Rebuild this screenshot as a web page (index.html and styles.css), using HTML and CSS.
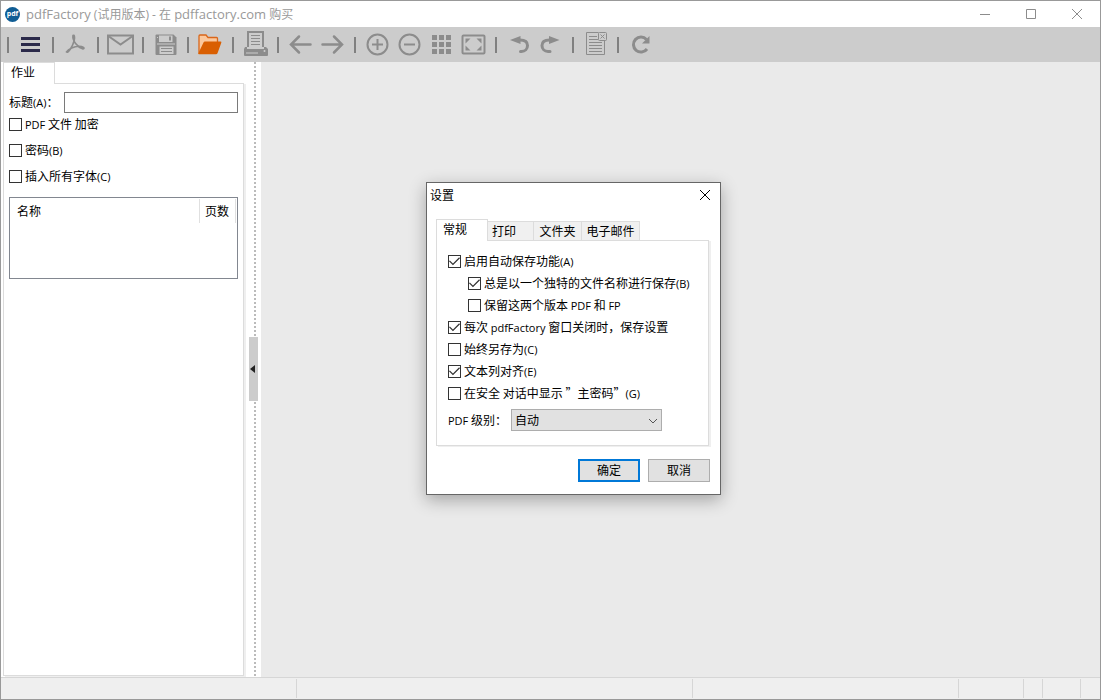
FILE: index.html
```html
<!DOCTYPE html>
<html lang="zh-CN">
<head>
    <meta charset="UTF-8" />
    <meta name="viewport" content="width=device-width, initial-scale=1.0"/>
    <title>pdfFactory (试用版本) - 在 pdffactory.com 购买</title>
    <link rel="stylesheet" href="styles.css">
</head>
<body>
    <div class="window">
        <header class="titlebar">
            <span class="logo">pdf</span>
            <h1><span class="name">pdfFactory</span> (试用版本) - 在 <span class="name">pdffactory.com</span> 购买</h1>
            <div class="window-buttons">
                <button type="button" aria-label="最小化"><svg width="12" height="12"><path d="M1 6.5h10"/></svg></button>
                <button type="button" aria-label="最大化"><svg width="12" height="12"><path d="M1.5 1.5h9v9h-9z"/></svg></button>
                <button type="button" aria-label="关闭"><svg width="12" height="12"><path d="M1 1l10 10M11 1L1 11"/></svg></button>
            </div>
        </header>

        <nav class="toolbar">
            <div class="group">
                <button type="button" aria-label="菜单"><svg viewBox="0 0 32 35"><path d="M6 10h19v3H6zM6 16h19v3H6zM6 22h19v3H6z" fill="#2b2a4a"/></svg></button>
            </div>
            <div class="group">
                <button type="button" aria-label="PDF"><svg viewBox="0 0 32 35" class="line"><path stroke-width="1.6" d="M13 8.5C12 13 17 20 23 22C25.500 21.500 23 19.200 19 19.200C14 19.500 8.500 22 6.500 25C8 26.500 12.500 20 14.200 13.500C15 9.500 14.300 7.500 13 8.500z"/></svg></button>
            </div>
            <div class="group">
                <button type="button" aria-label="邮件"><svg viewBox="0 0 32 35" class="line"><rect x="3" y="8.500" width="25" height="18"/><path d="M4 9.500l11.500 8L27 9.500"/></svg></button>
            </div>
            <div class="group">
                <button type="button" aria-label="保存"><svg viewBox="0 0 32 35"><path fill="#8c8c8c" d="M6.500 7.500h17l3 3V27q0 1-1 1h-19q-1 0-1-1V8.500q0-1 1-1z"/><path fill="#ccc" d="M9 8.500h13.500V15H9zM9.500 19.500h14V27h-14zM7 10h1v1H7zM7 16.500h18v1H7z"/><path fill="#8c8c8c" d="M19 9.500h2v4h-2zM11 21h11v1H11zM11 24h11v1H11z"/></svg></button>
            </div>
            <div class="group">
                <button type="button" aria-label="打开"><svg viewBox="0 0 32 35"><path fill="#fbc89d" stroke="#d9661a" stroke-width="1.3" d="M4 26V9q0-1 1-1h6l2 2.500h8.500q1 0 1 1V16L20 26z"/><path fill="#d95f02" d="M10 14.500h15.500q1.200 0 .8 1.200l-3.800 10.600q-.4 1-1.500 1H4q-1 0-.6-1l5.100-10.800q.4-1 1.500-1z"/></svg></button>
            </div>
            <div class="group">
                <button type="button" aria-label="打印"><svg viewBox="0 0 32 35"><path fill="none" stroke="#8c8c8c" stroke-width="2" d="M8 20V5h15v15"/><path stroke="#8c8c8c" d="M11 8.500h9M11 11.500h9M11 14.500h9M11 17.500h9"/><path fill="#8c8c8c" d="M5 20h2v2h17v-2h2l2 2v6q0 1-1 1H5q-1 0-1-1v-6z"/><path fill="#ccc" d="M6 25.500h12v1H6z"/><circle cx="24.500" cy="24" r="1" fill="#ccc"/></svg></button>
            </div>
            <div class="group">
                <button type="button" aria-label="上一页"><svg viewBox="0 0 32 35" class="line bold"><path d="M25.500 17.500H7M14 9.500l-8 8 8 8"/></svg></button>
                <button type="button" aria-label="下一页"><svg viewBox="0 0 32 35" class="line bold"><path d="M5.500 17.500H24M17 9.500l8 8-8 8"/></svg></button>
            </div>
            <div class="group">
                <button type="button" aria-label="放大"><svg viewBox="0 0 32 35" class="line"><circle cx="15.500" cy="17.500" r="10"/><path d="M10 17.500h11M15.500 12v11"/></svg></button>
                <button type="button" aria-label="缩小"><svg viewBox="0 0 32 35" class="line"><circle cx="15.500" cy="17.500" r="10"/><path d="M10 17.500h11"/></svg></button>
                <button type="button" aria-label="缩略图"><svg viewBox="0 0 32 35"><path fill="#8c8c8c" d="M6 8h5v5H6zM13 8h5v5h-5zM20 8h5v5h-5zM6 15h5v5H6zM13 15h5v5h-5zM20 15h5v5h-5zM6 22h5v5H6zM13 22h5v5h-5zM20 22h5v5h-5z"/></svg></button>
                <button type="button" aria-label="适合窗口"><svg viewBox="0 0 32 35"><rect x="4.500" y="8.500" width="22" height="18" rx="1" fill="none" stroke="#8c8c8c" stroke-width="2"/><path fill="#8c8c8c" d="M7.500 11.500h5l-5 5zM23.500 11.500v5l-5-5zM7.500 23.500v-5l5 5zM23.500 23.500h-5l5-5z"/></svg></button>
            </div>
            <div class="group">
                <button type="button" aria-label="撤消"><svg viewBox="0 0 32 35"><path fill="#8c8c8c" d="M7 13L17.500 9v8z"/><path fill="none" stroke="#8c8c8c" stroke-width="3" stroke-linecap="round" d="M17 13c5 0 7.500 2 7.500 5.500s-2.500 6-6 6h-1"/></svg></button>
                <button type="button" aria-label="重做"><svg viewBox="0 0 32 35"><path fill="#8c8c8c" d="M24.500 13L14 9v8z"/><path fill="none" stroke="#8c8c8c" stroke-width="3" stroke-linecap="round" d="M14.500 13c-5 0-7.500 2-7.500 5.500s2.500 6 6 6h2"/></svg></button>
            </div>
            <div class="group">
                <button type="button" aria-label="附注"><svg viewBox="0 0 32 35" class="line thin"><path d="M18.500 5.500h-12v22h18V14"/><path d="M9 9.500h8M9 12.500h9M9 15.500h13M9 18.500h13M9 21.500h13M9 24.500h13"/><rect x="18.500" y="5.500" width="8" height="8" rx="1"/><path d="M20.500 7.500l4 4M24.500 7.500l-4 4"/></svg></button>
            </div>
            <div class="group">
                <button type="button" aria-label="刷新"><svg viewBox="0 0 32 35"><path fill="none" stroke="#8c8c8c" stroke-width="3" d="M21.500 12.500A7.500 7.500 0 1 0 22 22"/><path fill="#8c8c8c" d="M24.500 9v7.500H17z"/></svg></button>
            </div>
        </nav>

        <main class="workspace">
            <aside class="sidebar">
                <button type="button" class="side-tab">作业</button>
                <div class="side-panel">
                    <div class="title-row">
                        <label for="docTitle">标题<span class="en">(A)</span>：</label>
                        <input type="text" id="docTitle">
                    </div>
                    <div class="side-checks">
                        <label class="check"><input type="checkbox"><span><span class="en">PDF</span> 文件 加密</span></label>
                        <label class="check"><input type="checkbox"><span>密码<span class="en">(B)</span></span></label>
                        <label class="check"><input type="checkbox"><span>插入所有字体<span class="en">(C)</span></span></label>
                    </div>
                    <div class="job-list">
                        <table>
                            <thead><tr><th>名称</th><th class="pages">页数</th></tr></thead>
                        </table>
                    </div>
                </div>
            </aside>
            <div class="splitter">
                <button type="button" aria-label="折叠"><svg width="5" height="8"><path d="M5 0v8L0 4z" fill="#222"/></svg></button>
            </div>
            <div class="preview"></div>
        </main>

        <footer class="statusbar">
            <span class="s1"></span>
            <span class="s2"></span>
            <span class="s3"></span>
            <span class="s4"></span>
            <span class="s5"></span>
            <span class="s6"></span>
            <span class="s7"></span>
        </footer>
    </div>

    <form class="dialog" role="dialog" aria-labelledby="dialogTitle">
        <div class="dialog-title">
            <h2 id="dialogTitle">设置</h2>
            <button type="button" aria-label="关闭"><svg width="12" height="12"><path d="M1 1l10 10M11 1L1 11"/></svg></button>
        </div>
        <div class="tabs" role="tablist">
            <button type="button" role="tab" aria-selected="true" class="tab active">常规</button>
            <button type="button" role="tab" class="tab print">打印</button>
            <button type="button" role="tab" class="tab folder">文件夹</button>
            <button type="button" role="tab" class="tab email">电子邮件</button>
        </div>
        <div class="tab-panel">
            <label class="check"><input type="checkbox" checked><span>启用自动保存功能<span class="en">(A)</span></span></label>
            <label class="check sub"><input type="checkbox" checked><span>总是以一个独特的文件名称进行保存<span class="en">(B)</span></span></label>
            <label class="check sub"><input type="checkbox"><span>保留这两个版本 <span class="en">PDF</span> 和 <span class="en">FP</span></span></label>
            <label class="check"><input type="checkbox" checked><span>每次 <span class="en">pdfFactory</span> 窗口关闭时，保存设置</span></label>
            <label class="check"><input type="checkbox"><span>始终另存为<span class="en">(C)</span></span></label>
            <label class="check"><input type="checkbox" checked><span>文本列对齐<span class="en">(E)</span></span></label>
            <label class="check"><input type="checkbox"><span>在安全 对话中显示 ”主密码”<span class="en">(G)</span></span></label>
            <div class="level-row">
                <label for="level"><span class="en">PDF</span> 级别：</label>
                <div class="select-box">
                    <select id="level"><option>自动</option></select>
                    <svg width="10" height="6"><path d="M1 1l4 4 4-4"/></svg>
                </div>
            </div>
        </div>
        <div class="actions">
            <button type="submit" class="primary">确定</button>
            <button type="button">取消</button>
        </div>
    </form>
</body>
</html>
```

FILE: styles.css
```css
* {
    box-sizing: border-box;
}
body {
    margin: 0;
    font-family: "Noto Sans CJK SC", "Open Sans", sans-serif;
    font-size: 12px;
    line-height: 16px;
    color: #000;
}
button, input, select {
    font: inherit;
    color: inherit;
    margin: 0;
    padding: 0;
    border-radius: 0;
}
button {
    border: none;
    background: none;
}
h1, h2 {
    margin: 0;
    font-size: 12px;
    font-weight: normal;
}
.en {
    font-family: "Open Sans", sans-serif;
    font-size: 11px;
}
.window {
    display: flex;
    flex-direction: column;
    height: 100vh;
    border: 1px solid #999;
    background: #fff;
}

/* title bar */
.titlebar {
    display: flex;
    align-items: center;
    height: 26px;
    padding-left: 4px;
    color: #999;
}
.titlebar h1 {
    flex: 1;
    margin-left: 6px;
    font-family: "Open Sans", "Noto Sans CJK SC", sans-serif;
}
.titlebar .name {
    font-size: 13px;
}
.logo {
    width: 15px;
    height: 15px;
    border-radius: 50%;
    background: #105d94;
    color: #fff;
    font: bold 7px/13px "Open Sans", sans-serif;
    text-align: center;
}
.window-buttons {
    display: flex;
}
.window-buttons button {
    display: grid;
    place-items: center;
    width: 46px;
    height: 26px;
}
.window-buttons path {
    fill: none;
    stroke: #8c8c8c;
}

/* toolbar */
.toolbar {
    display: flex;
    align-items: center;
    height: 35px;
    padding-left: 6px;
    background: #ccc;
}
.group {
    display: flex;
    align-items: center;
    padding: 0 5px 0 8px;
    background: linear-gradient(#808080, #808080) left center / 2px 16px no-repeat;
}
.group button, .group svg {
    display: block;
    width: 32px;
    height: 35px;
}
.line {
    fill: none;
    stroke: #8c8c8c;
    stroke-width: 2;
}
.line.bold {
    stroke-width: 2.5;
    stroke-linecap: round;
}
.line.thin {
    stroke-width: 1;
}

/* left side */
.workspace {
    flex: 1;
    display: flex;
    min-height: 0;
}
.sidebar {
    display: flex;
    flex-direction: column;
    align-items: flex-start;
    width: 245px;
    padding: 0 4px 1px 2px;
}
.side-tab {
    position: relative;
    width: 52px;
    height: 22px;
    margin-bottom: -1px;
    padding: 0 0 4px 7px;
    border: 1px solid #dcdcdc;
    border-bottom: none;
    background: #fff;
    text-align: left;
}
.side-panel {
    flex: 1;
    align-self: stretch;
    margin-right: -2px;
    padding: 8px 5px;
    border: 1px solid #dcdcdc;
    box-shadow: 2px 1px 0 #efefef;
}
.title-row {
    display: flex;
    align-items: center;
}
.title-row label {
    flex: 0 0 55px;
    white-space: nowrap;
}
.title-row input {
    flex: 1;
    min-width: 0;
    height: 21px;
    padding: 0 3px;
    border: 1px solid #7a7a7a;
}
.side-checks {
    display: grid;
    gap: 2px;
}
.check {
    display: flex;
    align-items: center;
    gap: 3px;
    height: 21px;
    margin-bottom: 1px;
    white-space: nowrap;
}
.side-checks .check {
    height: 23px;
}
.check input {
    appearance: none;
    flex: none;
    width: 13px;
    height: 13px;
    border: 1px solid #333;
    background: #fff;
}
.check input:checked::after {
    content: "";
    display: block;
    width: 11px;
    height: 11px;
    background: #333;
    clip-path: polygon(0 48%, 8% 40%, 36% 68%, 92% 12%, 100% 20%, 36% 84%);
}
.job-list {
    height: 82px;
    margin-top: 8px;
    padding: 1px;
    border: 1px solid #828790;
}
.job-list table {
    width: 100%;
    border-collapse: collapse;
}
.job-list th {
    height: 24px;
    padding: 0 6px;
    border-right: 1px solid #e0e0e0;
    font-weight: normal;
    text-align: left;
}
.job-list .pages {
    width: 36px;
    padding: 0 5px;
}
.splitter {
    display: flex;
    align-items: center;
    width: 15px;
    padding: 0 0 2px 3px;
    background: repeating-linear-gradient(#bbb 0 2px, #fff 2px 4px) 8px 0 / 2px 100% no-repeat;
}
.splitter button {
    display: grid;
    place-items: center;
    width: 9px;
    height: 64px;
    padding-right: 2px;
    background: #ccc;
}
.preview {
    flex: 1;
    background: #eaeaea;
}

/* status bar */
.statusbar {
    display: flex;
    height: 22px;
    padding: 1px 0;
    border-top: 1px solid #d6d6d6;
    background: #efefef;
}
.statusbar span {
    border-right: 1px solid #d6d6d6;
}
.s1 { width: 296px; }
.s2 { width: 396px; }
.s3 { flex: 1; }
.s4 { width: 65px; }
.s5 { width: 19px; }
.s6 { width: 38px; }
.statusbar .s7 {
    width: 19px;
    border: none;
}

/* settings dialog */
.dialog {
    position: absolute;
    left: 426px;
    top: 182px;
    width: 295px;
    padding: 0 10px 12px 9px;
    border: 1px solid #666;
    background: #fff;
    box-shadow: 0 5px 16px rgba(0, 0, 0, 0.3);
}
.dialog-title {
    display: flex;
    align-items: center;
    justify-content: space-between;
    height: 24px;
    margin: 0 -7px 12px -6px;
}
.dialog-title button {
    display: grid;
    place-items: center;
    width: 24px;
    height: 24px;
}
.dialog-title path {
    fill: none;
    stroke: #000;
}
.tabs {
    display: flex;
    align-items: flex-end;
    height: 21px;
}
.tab {
    height: 19px;
    border: 1px solid #dcdcdc;
    border-width: 1px 1px 0 0;
    background: #f0f0f0;
}
.tab.active {
    position: relative;
    width: 52px;
    height: 22px;
    margin-bottom: -1px;
    padding: 0 0 4px 6px;
    border-left-width: 1px;
    background: #fff;
    text-align: left;
}
.tab.print {
    width: 46px;
    padding-left: 4px;
    text-align: left;
}
.tab.folder {
    width: 48px;
}
.tab.email {
    width: 58px;
}
.tab-panel {
    margin-right: 1px;
    padding: 10px 11px 14px;
    border: 1px solid #dcdcdc;
    box-shadow: 2px 1px 0 #efefef;
}
.check.sub {
    margin-left: 20px;
}
.level-row {
    display: flex;
    align-items: center;
    margin-top: 5px;
}
.level-row label {
    flex: 0 0 63px;
    white-space: nowrap;
}
.select-box {
    position: relative;
    width: 151px;
}
.select-box select {
    appearance: none;
    display: block;
    width: 100%;
    height: 22px;
    padding: 0 3px;
    border: 1px solid #adadad;
    background: #e1e1e1;
}
.select-box svg {
    position: absolute;
    right: 4px;
    top: 9px;
    fill: none;
    stroke: #555;
    pointer-events: none;
}
.actions {
    display: flex;
    justify-content: flex-end;
    gap: 8px;
    margin-top: 13px;
}
.actions button {
    width: 62px;
    height: 23px;
    padding-bottom: 1px;
    border: 1px solid #adadad;
    background: #e1e1e1;
}
.actions .primary {
    border: 2px solid #0078d7;
}
```
